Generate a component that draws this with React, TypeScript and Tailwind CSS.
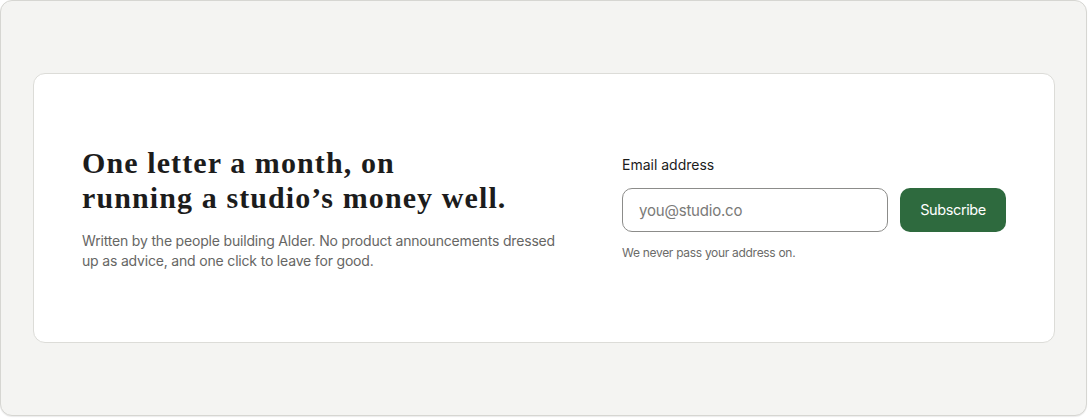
export default function App() {
  return (
    <div className="w-[1088px] h-[418px] bg-white">
      <div className="w-[1087px] h-[416px] rounded-[12px] border border-[#d6d6d2] bg-[#f4f4f2] shadow-[0_1px_1px_rgba(0,0,0,0.08)] pl-[32px] pr-[31px] pt-[72px]">
        <div className="w-full h-[270px] rounded-[12px] border border-[#dcdcd8] bg-white pl-[48px] pr-[48px] flex items-center justify-between">
          <div className="w-[490px]">
            <h2
              className="text-[30px] leading-[35px] font-bold text-[#1c1c1c] tracking-[1.1px]"
              style={{ fontFamily: '"Liberation Serif", "DejaVu Serif", serif' }}
            >
              One letter a month, on
              <br />
              running a studio’s money well.
            </h2>
            <p
              className="mt-[16px] text-[14px] leading-[20px] text-[#666664] tracking-[-0.18px]"
              style={{ fontFamily: 'Inter, "Liberation Sans", sans-serif' }}
            >
              Written by the people building Alder. No product announcements dressed up as advice, and one click to leave for good.
            </p>
          </div>
          <div
            className="w-[384px] flex flex-col"
            style={{ fontFamily: 'Inter, "Liberation Sans", sans-serif' }}
          >
            <label className="text-[14px] leading-[20px] text-[#1c1c1c]">Email address</label>
            <div className="mt-[13px] flex gap-[12px]">
              <input
                type="email"
                placeholder="you@studio.co"
                className="w-[266px] h-[44px] rounded-[10px] border border-[#8c8c8a] bg-white px-[16px] text-[15px] text-[#1c1c1c] placeholder:text-[#7a7a78] outline-none tracking-[-0.2px]"
              />
              <button className="w-[106px] h-[44px] rounded-[10px] bg-[#2e6a3e] text-white text-[14.5px] tracking-[-0.4px]">
                Subscribe
              </button>
            </div>
            <p className="mt-[13px] text-[12px] leading-[16px] text-[#6b6b69] tracking-[-0.3px]">We never pass your address on.</p>
          </div>
        </div>
      </div>
    </div>
  );
}
